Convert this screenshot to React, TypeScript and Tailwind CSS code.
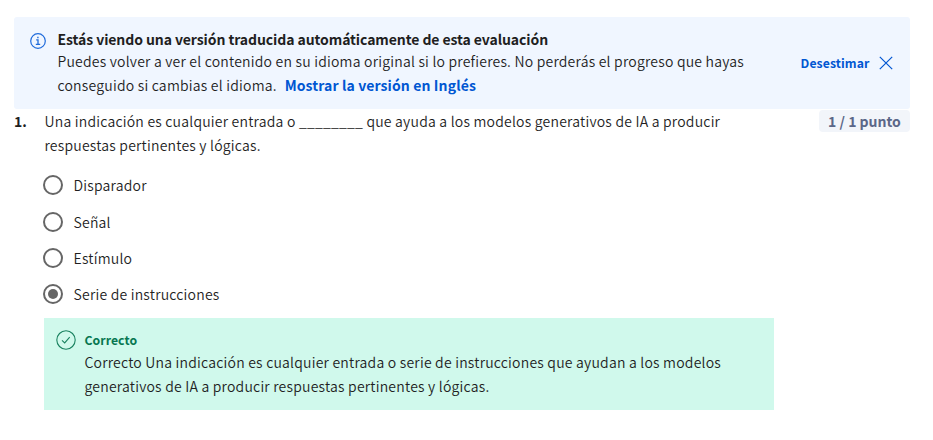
import React from "react";

const options = [
  { label: "Disparador", selected: false, row: "h-[37px]" },
  { label: "Señal", selected: false, row: "h-[36px]" },
  { label: "Estímulo", selected: false, row: "h-[36px]" },
  { label: "Serie de instrucciones", selected: true, row: "h-[36px]" },
];

function InfoIcon() {
  return (
    <svg width="16" height="16" viewBox="0 0 16 16" fill="none" stroke="#1f6bdb" className="block">
      <circle cx="8" cy="8" r="7.3" strokeWidth="1.2" />
      <path d="M6.2 6.8H8v4.4M5.8 11.4h4.4M7.2 4.5h1.4" strokeWidth="1.3" />
    </svg>
  );
}

function CloseIcon() {
  return (
    <svg width="14" height="14" viewBox="0 0 14 14" fill="none" stroke="#0056d2" strokeWidth="1.2" className="block">
      <path d="M.8.8l12.4 12.4M13.2.8L.8 13.2" />
    </svg>
  );
}

function CheckIcon() {
  return (
    <svg width="20" height="20" viewBox="0 0 20 20" fill="none" stroke="#1a8260" className="block">
      <circle cx="10" cy="10" r="9.2" strokeWidth="1.1" />
      <path d="M6 10.3l2.7 2.6 5-5.8" strokeWidth="1.1" />
    </svg>
  );
}

function Radio({ selected }: { selected: boolean }) {
  return (
    <span className="flex size-5 items-center justify-center rounded-full border-2 border-[#666]">
      {selected && <span className="size-2.5 rounded-full bg-[#666]" />}
    </span>
  );
}

export default function App() {
  return (
    <main className="h-[440px] w-[933px] overflow-hidden whitespace-nowrap bg-white pl-[14px] pr-[23px] pt-[17px] font-['Noto_Sans_CJK_SC',sans-serif] text-[14px] font-[350] leading-6 tracking-[0.215px] text-[#1f1f1f]">
      <section className="flex h-[92px] rounded-[3px] bg-[#f0f6ff] pl-4">
        <div className="mt-4 w-[27.5px]">
          <InfoIcon />
        </div>
        <div className="flex-1 pt-[10px]">
          <h2 className="h-[22px] font-semibold tracking-[-0.085px]">Estás viendo una versión traducida automáticamente de esta evaluación</h2>
          <p>Puedes volver a ver el contenido en su idioma original si lo prefieres. No perderás el progreso que hayas</p>
          <p>
            conseguido si cambias el idioma.
            <a className="ml-2 font-bold tracking-[0.11px] text-[#0056d2]">Mostrar la versión en Inglés</a>
          </p>
        </div>
        <button className="mr-[17px] flex items-center gap-[9.5px] text-[12.25px] font-semibold tracking-[0.08px] text-[#0056d2]">
          Desestimar
          <CloseIcon />
        </button>
      </section>

      <section className="flex items-start">
        <span className="w-[30.5px] font-bold tracking-normal">1.</span>
        <div className="flex-1">
          <p>Una indicación es cualquier entrada o ________ que ayuda a los modelos generativos de IA a producir</p>
          <p>respuestas pertinentes y lógicas.</p>
        </div>
        <span className="mt-px flex h-[22px] w-[91px] items-center justify-center rounded-[4px] bg-[#f2f5fa] font-bold tracking-normal text-[#5b6788]">
          1 / 1 punto
        </span>
      </section>

      <ul className="ml-[29px] mt-[10px]">
        {options.map((o) => (
          <li key={o.label} className={`flex items-start gap-[10.5px] ${o.row}`}>
            <span className="pt-[8px]">
              <Radio selected={o.selected} />
            </span>
            <span className="pt-[6px]">{o.label}</span>
          </li>
        ))}
      </ul>

      <section className="ml-[30px] mt-[6px] flex h-[92px] w-[730px] bg-[#d0f9ec] pl-3">
        <div className="w-[28.5px] pt-3">
          <CheckIcon />
        </div>
        <div className="pt-[10px]">
          <h3 className="h-[22px] text-[12.25px] font-bold tracking-[0.05px] text-[#077751]">Correcto</h3>
          <p>Correcto Una indicación es cualquier entrada o serie de instrucciones que ayudan a los modelos</p>
          <p>generativos de IA a producir respuestas pertinentes y lógicas.</p>
        </div>
      </section>
    </main>
  );
}
